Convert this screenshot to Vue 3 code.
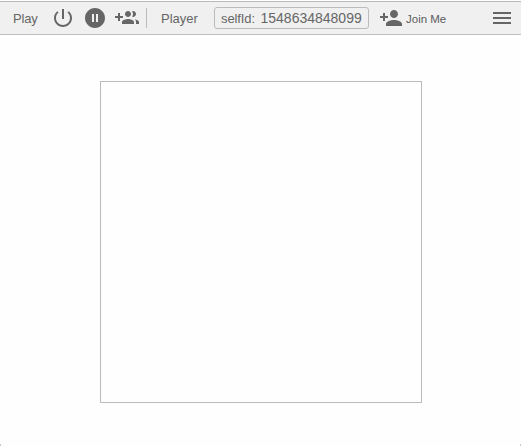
<script setup>
const selfId = '1548634848099'
</script>

<template>
  <div class="window">
    <header class="toolbar">
      <span class="label play">Play</span>
      <svg class="icon power" viewBox="0 0 24 24"><path d="M13 3h-2v10h2V3zm4.83 2.17l-1.42 1.42C17.99 7.86 19 9.81 19 12c0 3.87-3.13 7-7 7s-7-3.13-7-7c0-2.19 1.01-4.14 2.58-5.42L6.17 5.17C4.23 6.82 3 9.26 3 12c0 4.97 4.03 9 9 9s9-4.03 9-9c0-2.74-1.23-5.18-3.17-6.83z" /></svg>
      <svg class="icon pause" viewBox="0 0 24 24"><path d="M12 2C6.48 2 2 6.48 2 12s4.48 10 10 10 10-4.48 10-10S17.52 2 12 2zm-1 14H9V8h2v8zm4 0h-2V8h2v8z" /></svg>
      <svg class="icon group" viewBox="0 0 24 24"><path d="M8 10H5V7H3v3H0v2h3v3h2v-3h3v-2zm10 1c1.66 0 2.99-1.34 2.99-3S19.66 5 18 5c-.32 0-.63.05-.91.14.57.81.9 1.79.9 2.86s-.34 2.04-.9 2.86c.28.09.59.14.91.14zm-5 0c1.66 0 2.99-1.34 2.99-3S14.66 5 13 5c-1.66 0-3 1.34-3 3s1.34 3 3 3zm6.62 2.16c.83.73 1.38 1.66 1.38 2.84v2h3v-2c0-1.54-2.37-2.49-4.38-2.84zM13 13c-2 0-6 1-6 3v2h12v-2c0-2-4-3-6-3z" /></svg>
      <span class="divider"></span>
      <span class="label player">Player</span>
      <div class="id-box"><span class="key">selfId:</span><span class="value">{{ selfId }}</span></div>
      <svg class="icon person" viewBox="0 0 24 24"><path d="M15 12c2.21 0 4-1.79 4-4s-1.79-4-4-4-4 1.790-4 4 1.790 4 4 4zm-9-2V7H4v3H1v2h3v3h2v-3h3v-2H6zm9 4c-2.670 0-8 1.340-8 4v2h16v-2c0-2.660-5.330-4-8-4z" /></svg>
      <span class="join">Join Me</span>
      <svg class="icon menu" viewBox="0 0 24 24"><path d="M3 18h18v-2H3v2zm0-5h18v-2H3v2zm0-7v2h18V6H3z" /></svg>
    </header>
    <main class="stage"><div class="canvas"></div></main>
    <span class="corner left"></span>
    <span class="corner right"></span>
  </div>
</template>

<style>
body {
  background: #fefefe;
}
</style>

<style scoped>
.window {
  position: relative;
  box-sizing: border-box;
  height: 446px;
  padding-top: 1px;
  overflow: hidden;
  font-family: "Liberation Sans", Arial, sans-serif;
  font-size: 13px;
  color: #666;
}
.toolbar {
  box-sizing: border-box;
  display: flex;
  align-items: center;
  height: 34px;
  padding: 0 7px 0 13px;
  background: #f0f0f0;
  border-top: 1px solid #b9b9b9;
  border-bottom: 1px solid #bebebe;
  white-space: nowrap;
}
.label {
  line-height: 18px;
  padding-top: 1px;
}
.play {
  width: 38px;
  letter-spacing: -0.2px;
}
.player {
  width: 53px;
  margin-left: 14px;
}
.icon {
  flex: none;
  width: 24px;
  height: 24px;
  fill: #666;
}
.pause,
.group {
  margin-left: 8px;
}
.divider {
  width: 1px;
  height: 20px;
  margin-left: 7px;
  background: #bbb;
}
.id-box {
  box-sizing: border-box;
  display: flex;
  flex: none;
  align-items: baseline;
  width: 155px;
  height: 22px;
  padding: 2px 0 0 6px;
  border: 1px solid #bbb;
  border-radius: 3px;
}
.key {
  width: 39.5px;
  letter-spacing: -0.1px;
}
.value {
  font-size: 14px;
}
.person {
  margin-left: 10px;
}
.join {
  margin-left: 3px;
  padding-top: 2px;
  font-size: 11.5px;
  color: #5c5c5c;
}
.menu {
  margin-left: auto;
}
.stage {
  display: flex;
  justify-content: center;
  padding-top: 46px;
}
.canvas {
  box-sizing: border-box;
  width: 322px;
  height: 322px;
  margin-left: 1px;
  border: 1px solid #bbb;
}
.corner {
  position: absolute;
  bottom: 0;
  width: 1px;
  height: 2px;
  background: #c8c8c8;
}
.left {
  left: 0;
}
.right {
  right: 0;
}
</style>
